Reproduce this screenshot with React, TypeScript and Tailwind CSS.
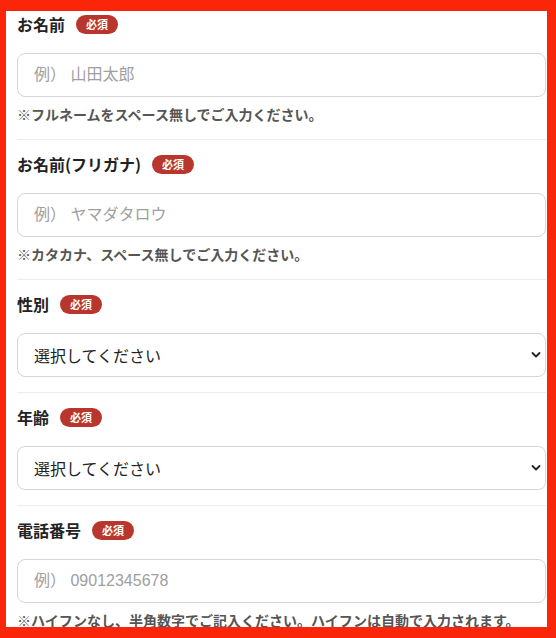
import React from 'react';

const font = { fontFamily: '"Noto Sans CJK JP", "Noto Sans", sans-serif' };
const fieldFont = { fontFamily: '"Liberation Sans", "Noto Sans CJK JP", sans-serif' };

function Badge() {
  return (
    <span className="ml-[11px] inline-flex h-[19px] items-center rounded-full bg-[#b9362c] px-[10px] text-[11px] font-bold leading-none text-white">
      必須
    </span>
  );
}

function Label({ text }: { text: string }) {
  return (
    <div className="mb-[19px] flex h-5 items-center">
      <span className="text-[16px] font-bold leading-5 text-[#222]">{text}</span>
      <Badge />
    </div>
  );
}

function Note({ text }: { text: string }) {
  return <p className="mt-2 text-[14px] font-bold leading-[18px] text-[#555] whitespace-nowrap">{text}</p>;
}

function TextField({ placeholder }: { placeholder: string }) {
  return (
    <input
      type="text"
      placeholder={placeholder}
      className="block h-[44px] w-full rounded-lg border border-[#d6d6d6] bg-white px-4 text-[16px] text-[#222] placeholder:text-[#a0a0a0] focus:outline-none"
      style={fieldFont}
    />
  );
}

function SelectField() {
  return (
    <div className="relative">
      <select
        className="block h-[44px] w-full appearance-none rounded-lg border border-[#d6d6d6] bg-white pl-4 pr-8 text-[16px] text-[#222] focus:outline-none"
        style={font}
        defaultValue=""
      >
        <option value="">選択してください</option>
      </select>
      <svg
        className="pointer-events-none absolute right-[5px] top-1/2 -translate-y-1/2"
        width="10"
        height="7"
        viewBox="0 0 10 7"
        fill="none"
      >
        <path d="M1.5 1.5 L5 5 L8.5 1.5" stroke="#222" strokeWidth="1.8" strokeLinecap="round" strokeLinejoin="round" />
      </svg>
    </div>
  );
}

export default function App() {
  return (
    <div className="h-[638px] w-[556px] overflow-hidden bg-[#fb2509] pl-[6px] pr-[9px] pt-[11px] pb-[11px]" style={font}>
      <div className="h-full overflow-hidden bg-white pl-[11px] pr-[1px]">
        <section className="border-b border-[#ececec] pt-[3px] pb-4">
          <Label text="お名前" />
          <TextField placeholder="例） 山田太郎" />
          <Note text="※フルネームをスペース無しでご入力ください。" />
        </section>

        <section className="border-b border-[#ececec] pt-[14px] pb-4">
          <Label text="お名前(フリガナ)" />
          <TextField placeholder="例） ヤマダタロウ" />
          <Note text="※カタカナ、スペース無しでご入力ください。" />
        </section>

        <section className="border-b border-[#ececec] pt-[14px] pb-[15px]">
          <Label text="性別" />
          <SelectField />
        </section>

        <section className="border-b border-[#ececec] pt-[14px] pb-[15px]">
          <Label text="年齢" />
          <SelectField />
        </section>

        <section className="pt-[14px] pb-4">
          <Label text="電話番号" />
          <TextField placeholder="例） 09012345678" />
          <Note text="※ハイフンなし、半角数字でご記入ください。ハイフンは自動で入力されます。" />
        </section>
      </div>
    </div>
  );
}
